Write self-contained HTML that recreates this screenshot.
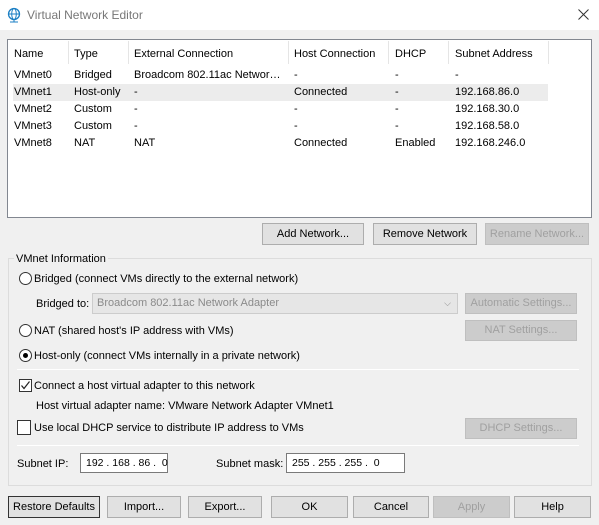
<!DOCTYPE html>
<html><head><style>
*{box-sizing:border-box;margin:0;padding:0}
body{width:599px;height:525px;background:#f0f0f0;font-family:"Liberation Sans",sans-serif;font-size:11px;color:#000;position:relative;overflow:hidden}
.a{position:absolute;white-space:nowrap}
.btn{position:absolute;background:#e1e1e1;border:1px solid #adadad;text-align:center;line-height:20px;height:22px;white-space:nowrap}
.dis{color:#a0a0a0;background:#cccccc;border-color:#bfbfbf}
.t{position:absolute;white-space:nowrap;line-height:14px}
.radio{position:absolute;width:13px;height:13px;border:1px solid #333;border-radius:50%;background:#fff}
.cb{position:absolute;width:13px;height:13px;border:1px solid #333;background:#fff}
.sep{position:absolute;height:1px;background:#a0a0a0;border-bottom:1px solid #fff}
</style></head><body>
<div class="a" style="left:0;top:0;width:599px;height:30px;background:#fff"></div>
<svg class="a" style="left:6px;top:7px" width="16" height="16" viewBox="0 0 16 16"><circle cx="8" cy="7" r="5.5" fill="none" stroke="#1b7fc4" stroke-width="1.3"/><ellipse cx="8" cy="7" rx="2.3" ry="5.5" fill="none" stroke="#1b7fc4" stroke-width="1"/><line x1="2.5" y1="7" x2="13.5" y2="7" stroke="#1b7fc4"/><line x1="8" y1="12.5" x2="8" y2="15" stroke="#1b7fc4"/><line x1="4" y1="15" x2="12" y2="15" stroke="#1b7fc4"/></svg>
<div class="t" style="left:27px;top:8px;font-size:12px;color:#777">Virtual Network Editor</div>
<svg class="a" style="left:578px;top:9px" width="11" height="11" viewBox="0 0 11 11"><path d="M0.5 0.5L10.5 10.5M10.5 0.5L0.5 10.5" stroke="#333" stroke-width="1"/></svg>

<div class="a" style="left:7px;top:39px;width:585px;height:179px;background:#fff;border:1px solid #828790"></div>
<div class="a" style="left:13px;top:84px;width:535px;height:17px;background:#ececec"></div>
<div class="a" style="left:68px;top:41px;width:1px;height:23px;background:#e5e5e5"></div>
<div class="a" style="left:128px;top:41px;width:1px;height:23px;background:#e5e5e5"></div>
<div class="a" style="left:288px;top:41px;width:1px;height:23px;background:#e5e5e5"></div>
<div class="a" style="left:388px;top:41px;width:1px;height:23px;background:#e5e5e5"></div>
<div class="a" style="left:448px;top:41px;width:1px;height:23px;background:#e5e5e5"></div>
<div class="a" style="left:548px;top:41px;width:1px;height:23px;background:#e5e5e5"></div>
<div class="t" style="left:14px;top:47px">Name</div><div class="t" style="left:74px;top:47px">Type</div><div class="t" style="left:134px;top:47px">External Connection</div><div class="t" style="left:294px;top:47px">Host Connection</div><div class="t" style="left:395px;top:47px">DHCP</div><div class="t" style="left:455px;top:47px">Subnet Address</div>
<div class="t" style="left:14px;top:68px">VMnet0</div><div class="t" style="left:74px;top:68px">Bridged</div><div class="t" style="left:134px;top:68px">Broadcom 802.11ac Networ…</div><div class="t" style="left:294px;top:68px">-</div><div class="t" style="left:395px;top:68px">-</div><div class="t" style="left:455px;top:68px">-</div>
<div class="t" style="left:14px;top:85px">VMnet1</div><div class="t" style="left:74px;top:85px">Host-only</div><div class="t" style="left:134px;top:85px">-</div><div class="t" style="left:294px;top:85px">Connected</div><div class="t" style="left:395px;top:85px">-</div><div class="t" style="left:455px;top:85px">192.168.86.0</div>
<div class="t" style="left:14px;top:102px">VMnet2</div><div class="t" style="left:74px;top:102px">Custom</div><div class="t" style="left:134px;top:102px">-</div><div class="t" style="left:294px;top:102px">-</div><div class="t" style="left:395px;top:102px">-</div><div class="t" style="left:455px;top:102px">192.168.30.0</div>
<div class="t" style="left:14px;top:119px">VMnet3</div><div class="t" style="left:74px;top:119px">Custom</div><div class="t" style="left:134px;top:119px">-</div><div class="t" style="left:294px;top:119px">-</div><div class="t" style="left:395px;top:119px">-</div><div class="t" style="left:455px;top:119px">192.168.58.0</div>
<div class="t" style="left:14px;top:136px">VMnet8</div><div class="t" style="left:74px;top:136px">NAT</div><div class="t" style="left:134px;top:136px">NAT</div><div class="t" style="left:294px;top:136px">Connected</div><div class="t" style="left:395px;top:136px">Enabled</div><div class="t" style="left:455px;top:136px">192.168.246.0</div>

<div class="btn" style="left:262px;top:223px;width:102px">Add Network...</div>
<div class="btn" style="left:373px;top:223px;width:104px">Remove Network</div>
<div class="btn dis" style="left:485px;top:223px;width:104px">Rename Network...</div>

<div class="a" style="left:8px;top:258px;width:584px;height:228px;border:1px solid #dcdcdc"></div>
<div class="t" style="left:14px;top:252px;background:#f0f0f0;padding:0 2px">VMnet Information</div>

<div class="radio" style="left:19px;top:272px"></div>
<div class="t" style="left:34px;top:272px">Bridged (connect VMs directly to the external network)</div>
<div class="t" style="left:36px;top:297px">Bridged to:</div>
<div class="a" style="left:92px;top:293px;width:366px;height:21px;background:#e6e6e6;border:1px solid #cccccc;color:#8a8a8a;line-height:19px;padding-left:4px">Broadcom 802.11ac Network Adapter<span style="position:absolute;right:6px;top:0;font-size:9px">⌵</span></div>
<div class="btn dis" style="left:465px;top:293px;width:112px;height:21px;line-height:19px">Automatic Settings...</div>

<div class="radio" style="left:19px;top:324px"></div>
<div class="t" style="left:34px;top:324px">NAT (shared host's IP address with VMs)</div>
<div class="btn dis" style="left:465px;top:320px;width:112px;height:21px;line-height:19px">NAT Settings...</div>

<div class="radio" style="left:19px;top:349px"></div>
<div class="a" style="left:23px;top:353px;width:5px;height:5px;border-radius:50%;background:#000"></div>
<div class="t" style="left:34px;top:349px">Host-only (connect VMs internally in a private network)</div>
<div class="sep" style="left:17px;top:369px;width:562px"></div>

<div class="cb" style="left:19px;top:379px"></div>
<svg class="a" style="left:20px;top:380px" width="11" height="11" viewBox="0 0 11 11"><path d="M1.5 5.5L4 8.5L9.5 1.5" fill="none" stroke="#222" stroke-width="1.2"/></svg>
<div class="t" style="left:34px;top:379px">Connect a host virtual adapter to this network</div>
<div class="t" style="left:36px;top:399px">Host virtual adapter name: VMware Network Adapter VMnet1</div>
<div class="cb" style="left:17px;top:420px;width:14px;height:15px"></div>
<div class="t" style="left:34px;top:421px">Use local DHCP service to distribute IP address to VMs</div>
<div class="btn dis" style="left:465px;top:418px;width:112px;height:21px;line-height:19px">DHCP Settings...</div>
<div class="sep" style="left:17px;top:445px;width:562px"></div>

<div class="t" style="left:17px;top:457px">Subnet IP:</div>
<div class="a" style="left:80px;top:453px;width:88px;height:20px;background:#fff;border:1px solid #7a7a7a;line-height:18px;padding-left:5px;font-size:10.5px">192 . 168 . 86 .&nbsp;&nbsp;0</div>
<div class="t" style="left:216px;top:457px">Subnet mask:</div>
<div class="a" style="left:286px;top:453px;width:119px;height:20px;background:#fff;border:1px solid #7a7a7a;line-height:18px;padding-left:5px;font-size:10.5px">255 . 255 . 255 .&nbsp;&nbsp;0</div>

<div class="btn" style="left:8px;top:496px;width:92px;border-color:#333">Restore Defaults</div>
<div class="btn" style="left:107px;top:496px;width:74px">Import...</div>
<div class="btn" style="left:188px;top:496px;width:74px">Export...</div>
<div class="btn" style="left:271px;top:496px;width:77px">OK</div>
<div class="btn" style="left:353px;top:496px;width:76px">Cancel</div>
<div class="btn dis" style="left:433px;top:496px;width:77px">Apply</div>
<div class="btn" style="left:514px;top:496px;width:77px">Help</div>
</body></html>
